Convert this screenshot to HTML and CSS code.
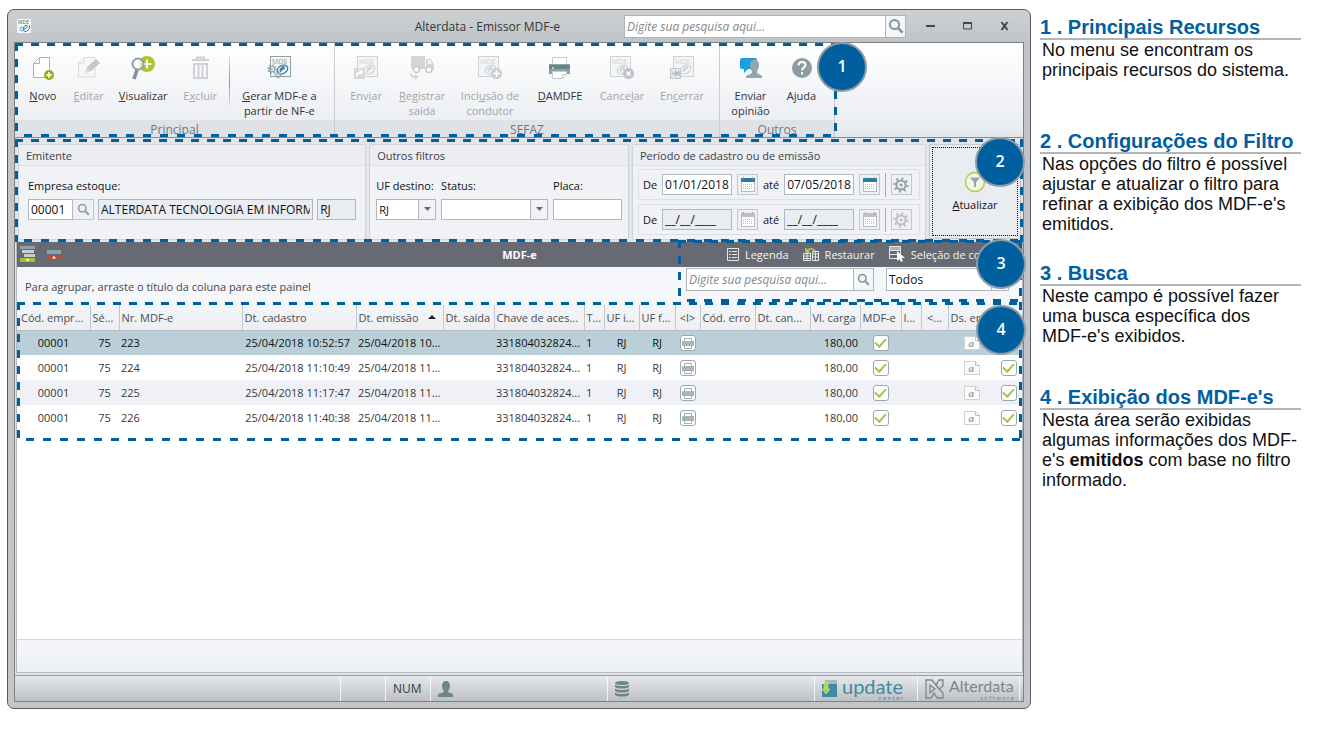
FILE: index.html
```html
<!DOCTYPE html>
<html lang="pt-BR">
<head>
<meta charset="utf-8">
<title>Alterdata - Emissor MDF-e</title>
<link rel="stylesheet" href="styles.css">
</head>
<body>
<svg class="defs" aria-hidden="true">
  <symbol id="i-lens" viewBox="0 0 16 16"><circle cx="6.5" cy="6.5" r="4.6" fill="none" stroke="currentColor" stroke-width="2"/><path d="M10 10l4.6 4.6" stroke="currentColor" stroke-width="2.6"/></symbol>
  <symbol id="i-mde" viewBox="0 0 24 24"><rect x="3.5" y=".5" width="20" height="20" fill="#f3f6f7" stroke="currentColor"/><text x="5" y="8" font-size="7" font-family="Open Sans, sans-serif" fill="currentColor">MDE</text></symbol>
  <symbol id="i-e" viewBox="0 0 24 24"><ellipse cx="15.500" cy="13.500" rx="5.500" ry="4" transform="rotate(-30 15.500 13.500)" fill="none" stroke="currentColor" stroke-width="1.300"/><path d="M12.500 14c3 0 6-2 4.500-3s-5 3-3 5" fill="none" stroke="currentColor" stroke-width="1.300"/></symbol>
  <symbol id="i-gear" viewBox="0 0 16 16"><circle cx="8" cy="8" r="4.600" fill="none" stroke="currentColor" stroke-width="2"/><circle cx="8" cy="8" r="6.600" fill="none" stroke="currentColor" stroke-width="2" stroke-dasharray="2.200 2.980"/><circle cx="8" cy="8" r="1.500" fill="currentColor"/></symbol>
  <symbol id="i-cal" viewBox="0 0 16 16"><rect x="1.500" y="1.500" width="13" height="13" fill="#fff" stroke="#b4bcc2"/><path d="M1 1h14v4H1z" fill="currentColor"/><path d="M3 7.500h10M3 9.500h10M3 11.500h10" stroke="#b4bcc2" stroke-dasharray="1 1"/><path d="M3.500 0v2M12.500 0v2" stroke="#9aa5aa"/></symbol>
  <symbol id="i-printer" viewBox="0 0 24 24"><path d="M4.500 9V1.500h14V9" fill="#fff" stroke="#c3cacd"/><path d="M1 8h21v10H1z" fill="#90a2a8"/><path d="M1 9h21v4H1z" fill="#6d838b"/><path d="M4 11h2v2H4z" fill="#c5d84a"/><path d="M4.500 15.500h14v3l-4 4h-10z" fill="#fff" stroke="#c3cacd"/><path d="M14.500 22v-3.500h4" fill="none" stroke="#c3cacd"/></symbol>
  <symbol id="i-print" viewBox="0 0 16 16"><rect x=".5" y=".5" width="15" height="15" rx="2.500" fill="#fdfefe" stroke="#9aaab0"/><path d="M4.500 6V3.500h7V6" fill="none" stroke="#9fb0b6"/><path d="M2 6h12v5H2z" fill="#a7b5ba"/><path d="M2 6h2v1H2z" fill="#c5d84a"/><path d="M4.500 10.500h7v3h-7z" fill="#fff" stroke="#9fb0b6"/></symbol>
  <symbol id="i-note" viewBox="0 0 16 14"><path d="M.5.5h11l4 4v9H.5z" fill="#fcfcfc" stroke="#cfd1d3"/><path d="M11.500.5v4h4" fill="none" stroke="#bfc2c4"/><text x="4.500" y="11" font-family="Liberation Serif, serif" font-size="11" font-style="italic" font-weight="bold" fill="#9b9fa2">a</text></symbol>
</svg>
<div class="page">
<main class="window">
  <header class="titlebar">
    <svg class="app-icon" viewBox="0 0 14 14"><path d="M0 0h14v14H0z" fill="#f4f8fa"/><text x="1" y="5" font-size="5" font-family="Open Sans, sans-serif" fill="#566">MDE</text><circle cx="5" cy="10" r="2" fill="none" stroke="#89a"/><path d="M6 10c4 0 6-4 3-3.500s-4 6 0 6c3-1 4-4 3.500-6" fill="none" stroke="#2c7da3"/></svg>
    <h1 class="title">Alterdata - Emissor MDF-e</h1>
    <form class="search search-top">
      <input type="text" aria-label="Pesquisa" placeholder="Digite sua pesquisa aqui...">
      <button type="button" aria-label="Pesquisar"><svg width="16" height="16"><use href="#i-lens"/></svg></button>
    </form>
    <div class="controls">
      <button type="button" aria-label="Minimizar"><svg width="10" height="10"><path d="M0 5h9" stroke="#43464b" stroke-width="2"/></svg></button>
      <button type="button" aria-label="Maximizar"><svg width="10" height="10"><path d="M.5 2h8v6h-8z" fill="none" stroke="#43464b"/><path d="M0 2h9" stroke="#43464b" stroke-width="2"/></svg></button>
      <button type="button" aria-label="Fechar"><svg width="10" height="10"><path d="M1.500 1l6 8M7.500 1l-6 8" stroke="#43464b" stroke-width="2"/></svg></button>
    </div>
  </header>
  <div class="frame">
    <nav class="ribbon">
      <div class="ribbon-groups">
        <section class="group group-main">
          <div class="tools">
            <button class="tool w-47" type="button"><svg width="24" height="24" viewBox="0 0 24 24"><path d="M8.500 1.500H18.500V21.500H2.500V7.500z" fill="#fff" stroke="#aab4b9"/><path d="M8.500 1.500v6h-6" fill="none" stroke="#aab4b9"/><circle cx="18" cy="19" r="5" fill="#8fae1f"/><path d="M18 16v6M15 19h6" stroke="#fff" stroke-width="1.500"/></svg><span><u>N</u>ovo</span></button>
            <button class="tool w-47" type="button" disabled><svg width="24" height="24" viewBox="0 0 24 24"><path d="M7 1.500h11V21H1.500V7z" fill="#f6f7f8" stroke="#d8dadc"/><path d="M7 1.500V7H1.500" fill="none" stroke="#d8dadc"/><path d="M8 17l2-6 9-8 4 4-9 8z" fill="#c6c8ca"/><path d="M8 17l2-6 3 4z" fill="#d9dbdc"/></svg><span><u>E</u>ditar</span></button>
            <button class="tool w-64" type="button"><svg width="24" height="24" viewBox="0 0 24 24"><circle cx="16" cy="8" r="8" fill="#a9c52b"/><path d="M16 3.500v9M11.500 8h9" stroke="#fff" stroke-width="2"/><circle cx="7" cy="8" r="5.500" fill="#fff" fill-opacity=".7" stroke="#8fa1a8" stroke-width="2"/><path d="M6 14l-3 9" stroke="#7f9299" stroke-width="3.500"/></svg><span><u>V</u>isualizar</span></button>
            <button class="tool w-51" type="button" disabled><svg width="24" height="24" viewBox="0 0 24 24"><path d="M4 4h17M9 3V1.500h7V3M6 8h13v14H6z" fill="none" stroke="#cfd1d4" stroke-width="2"/><path d="M10.500 8v14M14.500 8v14" stroke="#cfd1d4" stroke-width="2"/></svg><span>E<u>x</u>cluir</span></button>
            <i class="rule"></i>
            <button class="tool w-100" type="button"><svg class="dark" width="24" height="24" viewBox="0 0 24 24"><use href="#i-mde"/><g class="blue"><use href="#i-e"/></g><svg x="0" y="8" width="10" height="10"><use href="#i-gear"/></svg><svg x="7" y="15" width="8" height="8"><use href="#i-gear"/></svg></svg><span><u>G</u>erar MDF-e a<br>partir de NF-e</span></button>
          </div>
          <h2>Principal</h2>
        </section>
        <section class="group group-sefaz">
          <div class="tools">
            <button class="tool w-56" type="button" disabled><svg width="24" height="24" viewBox="0 0 24 24"><use href="#i-mde"/><use href="#i-e"/><path d="M0 12h11v11H0z" fill="#d6d8da"/><path d="M2.500 21c0-4 2-5 5-5m-2-2.500l3 2.500-3 2.500" fill="none" stroke="#fff" stroke-width="1.500"/></svg><span>Env<u>i</u>ar</span></button>
            <button class="tool w-56" type="button" disabled><svg width="24" height="24" viewBox="0 0 24 24"><path d="M1 0h14v13H1zM16 3h5l3 6v5h-8z" fill="#d3d5d7"/><path d="M18 4h2l2 4h-4z" fill="#f6f7f8"/><circle cx="6.500" cy="13.500" r="3" fill="#fff" stroke="#c6c8cb" stroke-width="1.500"/><circle cx="19" cy="13.500" r="3" fill="#fff" stroke="#c6c8cb" stroke-width="1.500"/><path d="M1 15c0 5 3 5 4 5v-2l4 3-4 3v-2c-4 0-6-3-4-7z" fill="#d3d5d7"/></svg><span><u>R</u>egistrar<br>saída</span></button>
            <button class="tool w-80" type="button" disabled><svg width="24" height="24" viewBox="0 0 24 24"><use href="#i-mde" x="-3"/><use href="#i-e" x="-3"/><circle cx="18.500" cy="17.500" r="5.500" fill="#cbcdd0"/><path d="M18.500 14v7M15 17.500h7" stroke="#fff" stroke-width="1.500"/></svg><span>Incl<u>u</u>são de<br>condutor</span></button>
            <button class="tool w-60" type="button"><svg width="24" height="24"><use href="#i-printer"/></svg><span><u>D</u>AMDFE</span></button>
            <button class="tool w-64" type="button" disabled><svg width="24" height="24" viewBox="0 0 24 24"><use href="#i-mde" x="-3"/><use href="#i-e" x="-3"/><circle cx="18.500" cy="17.500" r="5.500" fill="#bfc1c4"/><path d="M16.500 15.500l4 4m0-4l-4 4" stroke="#fff" stroke-width="1.500"/></svg><span>Cance<u>l</u>ar</span></button>
            <button class="tool w-56" type="button" disabled><svg width="24" height="24" viewBox="0 0 24 24"><use href="#i-mde"/><use href="#i-e"/><path d="M.5 12.500h10v10H.5z" fill="#e6e7e9" stroke="#c3c5c8"/><path d="M2 17.500h5m-2-2.500l2.500 2.500L5 20M9 15v5" fill="none" stroke="#b4b6b9" stroke-width="1.500"/></svg><span>En<u>c</u>errar</span></button>
          </div>
          <h2>SEFAZ</h2>
        </section>
        <section class="group group-other">
          <div class="tools">
            <button class="tool w-51" type="button"><svg width="24" height="24" viewBox="0 0 24 24"><path d="M3 2h13a2 2 0 0 1 2 2v9H9l-4 4v-4H3a2 2 0 0 1-2-2V4a2 2 0 0 1 2-2z" fill="#1e9de0"/><path d="M11 9c0-7 9-7 9 0 0 4-2 5-2 8l5 3v2H7v-2l6-3c0-3-2-4-2-8z" fill="#93a5ad"/></svg><span>Enviar<br>opinião</span></button>
            <button class="tool w-51" type="button"><svg width="24" height="24" viewBox="0 0 24 24"><circle cx="12" cy="12" r="10" fill="#8b9ca3"/><path d="M8.500 9.500c0-5 7-4.500 7-.5 0 2.500-3.500 2.500-3.500 5.500M12 16v2.500" fill="none" stroke="#fff" stroke-width="2"/></svg><span>Ajuda</span></button>
          </div>
          <h2>Outros</h2>
        </section>
        <div class="dashes dashes-ribbon"></div>
        <b class="badge badge-1">1</b>
      </div>
    </nav>

    <section class="filters">
      <fieldset class="panel panel-emit">
        <h3>Emitente</h3>
        <div class="panel-body">
          <label for="emp">Empresa estoque:</label>
          <div class="row">
            <div class="joined"><input id="emp" class="f-44" type="text" value="00001"><button class="sq" type="button" aria-label="Buscar empresa"><svg width="13" height="13"><use href="#i-lens"/></svg></button></div>
            <input class="grow" type="text" readonly aria-label="Nome da empresa" value="ALTERDATA TECNOLOGIA EM INFORMÁTICA">
            <input class="f-39" type="text" readonly aria-label="UF" value="RJ">
          </div>
        </div>
      </fieldset>
      <fieldset class="panel panel-other">
        <h3>Outros filtros</h3>
        <div class="panel-body fields">
          <label for="uf">UF destino:</label><label for="st">Status:</label><label for="pl">Placa:</label>
          <select id="uf"><option>RJ</option></select>
          <select id="st"><option></option></select>
          <input id="pl" type="text">
        </div>
      </fieldset>
      <fieldset class="panel panel-period">
        <h3>Período de cadastro ou de emissão</h3>
        <div class="periods">
          <div class="period">
            <label for="d1">De</label><input id="d1" type="text" value="01/01/2018">
            <button class="sq teal" type="button" aria-label="Calendário"><svg width="16" height="16"><use href="#i-cal"/></svg></button>
            <label for="d2">até</label><input id="d2" type="text" value="07/05/2018">
            <button class="sq teal" type="button" aria-label="Calendário"><svg width="16" height="16"><use href="#i-cal"/></svg></button>
            <i class="sep"></i>
            <button class="sq" type="button" aria-label="Opções"><svg width="16" height="16"><use href="#i-gear"/></svg></button>
          </div>
          <div class="period">
            <label for="d3">De</label><input id="d3" type="text" readonly value="__/__/____">
            <button class="sq" type="button" disabled aria-label="Calendário"><svg width="16" height="16"><use href="#i-cal"/></svg></button>
            <label for="d4">até</label><input id="d4" type="text" readonly value="__/__/____">
            <button class="sq" type="button" disabled aria-label="Calendário"><svg width="16" height="16"><use href="#i-cal"/></svg></button>
            <i class="sep"></i>
            <button class="sq" type="button" disabled aria-label="Opções"><svg width="16" height="16"><use href="#i-gear"/></svg></button>
          </div>
        </div>
      </fieldset>
      <button class="refresh" type="button"><svg width="22" height="22" viewBox="0 0 22 22"><circle cx="11" cy="11" r="9.500" fill="#f3f6e4" stroke="#b5cb4e" stroke-width="1.500"/><path d="M6 6.500h10l-4 5v5l-2-1v-4z" fill="#93a7b0"/></svg><span><u>A</u>tualizar</span></button>
      <div class="dashes dashes-filters"></div>
      <b class="badge badge-2">2</b>
    </section>

    <section class="grid">
      <div class="grid-top">
        <div class="bar">
          <div class="bar-left">
            <button type="button" aria-label="Expandir"><svg width="16" height="17"><path d="M0 0h15v3H0z" fill="#8fa1a8"/><path d="M2 4h12v3H2zM4 8h11v3H4z" fill="#c5ced3"/><path d="M0 12h15v4H0z" fill="#a4c22d"/><path d="M5.500 13h4l-2 2.500z" fill="#fff"/></svg></button>
            <button type="button" aria-label="Recolher"><svg width="16" height="17"><path d="M1 4h14v4H1z" fill="#8fa1a8"/><path d="M1 9h14v4H1z" fill="#b55132"/><path d="M6 12.500h4L8 10z" fill="#fff"/></svg></button>
          </div>
          <h2>MDF-e</h2>
          <div class="bar-right">
            <button type="button"><svg width="13" height="14"><path d="M.5.5h11v12H.5z" fill="none" stroke="#e4e6e8"/><path d="M2 3.500h2M5 3.500h5M2 6.500h2M5 6.500h5M2 9.500h2M5 9.500h5" stroke="#e4e6e8"/></svg>Legenda</button>
            <button type="button"><svg width="17" height="14"><path d="M.5 5.500h7v7h-7zM.5 8h7M.5 10.500h7M4 5.500v7M9.500 3.500h6v9h-6zM9.500 6h6M9.500 9h6M12.500 3.500v9" fill="none" stroke="#e4e6e8"/><path d="M4 3c2-3 6-3 8 0M3 0v4h4" fill="none" stroke="#b8cc55" stroke-width="1.500"/></svg>Restaurar</button>
            <button type="button"><svg width="17" height="17"><path d="M.5.5h11v12H.5z" fill="none" stroke="#e4e6e8"/><path d="M1 1h10v3H1z" fill="#aeb2b7"/><path d="M0 4.500h12M0 8.500h12" stroke="#e4e6e8"/><path d="M8 5v10l2.500-2 1.500 3 2-1-1.500-3H16z" fill="#fff"/></svg>Seleção de colunas</button>
          </div>
        </div>
        <div class="grouping">
          <p>Para agrupar, arraste o título da coluna para este painel</p>
          <form class="search search-grid">
            <input type="text" aria-label="Pesquisa na lista" placeholder="Digite sua pesquisa aqui...">
            <button type="button" aria-label="Pesquisar"><svg width="13" height="13"><use href="#i-lens"/></svg></button>
          </form>
          <select class="scope" aria-label="Campo da pesquisa"><option>Todos</option></select>
        </div>
        <div class="dashes dashes-search"></div>
        <b class="badge badge-3">3</b>
      </div>
      <div class="table-wrap">
        <table>
          <colgroup><col class="c73"><col class="c29"><col class="c123"><col class="c114"><col class="c87"><col class="c51"><col class="c90"><col class="c20"><col class="c35"><col class="c36"><col class="c25"><col class="c55"><col class="c55"><col class="c50"><col class="c41"><col class="c20"><col class="c27"><col class="c47"><col class="c27"></colgroup>
          <thead><tr><th>Cód. empr...</th><th>Sé...</th><th>Nr. MDF-e</th><th>Dt. cadastro</th><th class="sorted">Dt. emissão</th><th>Dt. saída</th><th>Chave de aces...</th><th>T...</th><th>UF i...</th><th>UF f...</th><th class="mid">&lt;I&gt;</th><th>Cód. erro</th><th>Dt. can...</th><th>Vl. carga</th><th>MDF-e</th><th>I...</th><th class="mid">&lt;...</th><th>Ds. er...</th><th></th></tr></thead>
          <tbody>
            <tr class="selected"><td class="mid">00001</td><td class="mid">75</td><td>223</td><td class="end">25/04/2018 10:52:57</td><td>25/04/2018 10...</td><td></td><td>331804032824...</td><td>1</td><td class="mid">RJ</td><td class="mid">RJ</td><td class="mid"><svg width="16" height="16"><use href="#i-print"/></svg></td><td></td><td></td><td class="money">180,00</td><td class="mid"><input type="checkbox" checked aria-label="MDF-e 223"></td><td></td><td></td><td class="mid"><svg width="16" height="14"><use href="#i-note"/></svg></td><td class="mid"><input type="checkbox" checked aria-label="Situação 223"></td></tr>
            <tr><td class="mid">00001</td><td class="mid">75</td><td>224</td><td class="end">25/04/2018 11:10:49</td><td>25/04/2018 11...</td><td></td><td>331804032824...</td><td>1</td><td class="mid">RJ</td><td class="mid">RJ</td><td class="mid"><svg width="16" height="16"><use href="#i-print"/></svg></td><td></td><td></td><td class="money">180,00</td><td class="mid"><input type="checkbox" checked aria-label="MDF-e 224"></td><td></td><td></td><td class="mid"><svg width="16" height="14"><use href="#i-note"/></svg></td><td class="mid"><input type="checkbox" checked aria-label="Situação 224"></td></tr>
            <tr><td class="mid">00001</td><td class="mid">75</td><td>225</td><td class="end">25/04/2018 11:17:47</td><td>25/04/2018 11...</td><td></td><td>331804032824...</td><td>1</td><td class="mid">RJ</td><td class="mid">RJ</td><td class="mid"><svg width="16" height="16"><use href="#i-print"/></svg></td><td></td><td></td><td class="money">180,00</td><td class="mid"><input type="checkbox" checked aria-label="MDF-e 225"></td><td></td><td></td><td class="mid"><svg width="16" height="14"><use href="#i-note"/></svg></td><td class="mid"><input type="checkbox" checked aria-label="Situação 225"></td></tr>
            <tr><td class="mid">00001</td><td class="mid">75</td><td>226</td><td class="end">25/04/2018 11:40:38</td><td>25/04/2018 11...</td><td></td><td>331804032824...</td><td>1</td><td class="mid">RJ</td><td class="mid">RJ</td><td class="mid"><svg width="16" height="16"><use href="#i-print"/></svg></td><td></td><td></td><td class="money">180,00</td><td class="mid"><input type="checkbox" checked aria-label="MDF-e 226"></td><td></td><td></td><td class="mid"><svg width="16" height="14"><use href="#i-note"/></svg></td><td class="mid"><input type="checkbox" checked aria-label="Situação 226"></td></tr>
          </tbody>
        </table>
        <div class="dashes dashes-table"></div>
        <b class="badge badge-4">4</b>
      </div>
      <div class="grid-foot"></div>
    </section>

    <footer class="status">
      <span></span><span></span>
      <span class="num">NUM</span>
      <span><svg width="16" height="16"><path d="M4 5c0-7 8-7 8 0 0 4-2 4-2 6l5 2v3H0v-3l6-2c0-2-2-2-2-6z" fill="#6f858c"/></svg></span>
      <span><svg width="14" height="16" fill="#6f858c"><ellipse cx="7" cy="2" rx="7" ry="2"/><path d="M0 3.500c3 2 11 2 14 0V6c-3 2-11 2-14 0zM0 7.500c3 2 11 2 14 0V10c-3 2-11 2-14 0zM0 11.500c3 2 11 2 14 0V14c-3 2-11 2-14 0z"/></svg></span>
      <span class="logo logo-update"><svg width="16" height="19"><path d="M3 1h12v5H3z" fill="#a9b8c0"/><path d="M0 5h15v13H0z" fill="#3e8ba3"/><path d="M2 3h4v7h2l-4 5-4-5h2z" fill="#b4d34a" stroke="#e5efb0" stroke-width=".5"/></svg><b>update<small>c e n t e r</small></b></span>
      <span class="logo"><svg width="20" height="20" fill="none" stroke="#7d868b" stroke-width="1.300"><path d="M1 1h6l4 5 3-5h4v6l-4 3 4 4v5h-6l-3-5-3 5H1zM5 6v8l5-4zM11 6l3 4"/></svg><b>Alterdata<small>s o f t w a r e</small></b></span>
    </footer>
  </div>
</main>

<aside class="notes">
  <section><h2>1 . Principais Recursos</h2><p>No menu se encontram os principais recursos do sistema.</p></section>
  <section><h2>2 . Configurações do Filtro</h2><p>Nas opções do filtro é possível ajustar e atualizar o filtro para refinar a exibição dos MDF-e's emitidos.</p></section>
  <section><h2>3 . Busca</h2><p>Neste campo é possível fazer uma busca específica dos MDF-e's exibidos.</p></section>
  <section><h2>4 . Exibição dos MDF-e's</h2><p>Nesta área serão exibidas algumas informações dos MDF-e's <strong>emitidos</strong> com base no filtro informado.</p></section>
</aside>
</div>
</body>
</html>
```

FILE: styles.css
```css
* { box-sizing: border-box; }
body { margin: 0; background: #fff; font-family: "Open Sans", "Noto Sans", sans-serif; font-size: 11px; line-height: 15px; color: #37393d; }
h1, h2, h3, p, fieldset { margin: 0; padding: 0; border: 0; font-weight: 400; font-size: inherit; min-width: 0; }
button, input, select { font: inherit; color: inherit; margin: 0; padding: 0; border-radius: 0; }
button { background: none; border: 0; }
svg { display: block; flex: none; }
.defs { position: absolute; width: 0; height: 0; }

.page { display: flex; gap: 9px; min-height: 100vh; padding: 9px 24px 20px 7px; }
.window { flex: 1; min-width: 0; display: flex; flex-direction: column; padding: 0 6px 6px; border: 1px solid #565b64; border-radius: 7px; background: linear-gradient(#cdd0d3, #c0c4c7 33px, #c3c6c9); }

/* Title bar */
.titlebar { display: flex; align-items: center; height: 32px; padding: 0 5px 0 3px; }
.app-icon { width: 14px; height: 14px; }
.title { flex: 1; text-align: right; padding-right: 64px; font-size: 12px; color: #33363a; }
.search { display: flex; border: 1px solid #aeb4ba; background: #fff; color: #83969e; }
.search input { flex: 1; min-width: 0; border: 0; padding: 0 2px; font-size: 12px; font-style: italic; outline: 0; }
.search input::placeholder { color: #85888c; opacity: 1; }
.search button { width: 20px; border-left: 1px solid #aeb4ba; background: #f4f6f8; display: grid; place-items: center; }
.search-top { width: 282px; height: 23px; }
.controls { display: flex; gap: 27px; margin: 0 9px 0 20px; }

.frame { flex: 1; display: flex; flex-direction: column; border: 1px solid #7c8186; background: #e2e5e9; }

/* Ribbon */
.ribbon { background: linear-gradient(#fff, #eceef2 77px, #e3e6ea 95px); border-bottom: 1px solid #868b90; }
.ribbon-groups { position: relative; display: flex; width: 820px; }
.group { display: flex; flex-direction: column; height: 94px; border-right: 1px solid #c9cdd2; }
.group-main { width: 320px; }
.group-sefaz { width: 385px; }
.group-other { flex: 1; }
.group h2 { height: 17px; font-size: 12px; line-height: 19px; text-align: center; color: #72777e; background: #dfe2e7; }
.tools { flex: 1; display: flex; padding: 13px 5px 0; }
.group-sefaz .tools { padding-left: 3px; }
.tool { display: flex; flex-direction: column; align-items: center; gap: 8px; color: #303338; line-height: 15px; white-space: nowrap; align-self: flex-start; }
.tool:disabled { color: #a2a5a9; }
.tool:disabled svg { color: #cfd1d4; }
.tool .dark { color: #8fa1a8; }
.blue { color: #2478a6; }
.w-47 { width: 46px; }
.w-51 { width: 51px; }
.w-56 { width: 56px; }
.w-60 { width: 60px; }
.w-64 { width: 64px; }
.w-80 { width: 80px; }
.w-100 { width: 100px; }
.rule { width: 1px; height: 50px; margin-left: 3px; background: linear-gradient(#dfe1e4, #8c9094, #dfe1e4); }

/* Callout outlines and badges */
.dashes { position: absolute; pointer-events: none;
  background:
    repeating-linear-gradient(90deg, #00609f 0 8px, transparent 8px 16px) top / 100% 3px no-repeat,
    repeating-linear-gradient(90deg, transparent 0 9px, #00609f 9px 17px) bottom / 100% 3px no-repeat,
    repeating-linear-gradient(#00609f 0 8px, transparent 8px 16px) left / 3px 100% no-repeat,
    repeating-linear-gradient(#00609f 0 8px, transparent 8px 16px) right / 3px 100% no-repeat; }
.dashes-ribbon { inset: 0 -2px 0 0; }
.dashes-filters { inset: 1px 0 0; }
.dashes-search { inset: -2px 0 3px auto; width: 344px; }
.dashes-table { inset: -3px 0 0; }
.badge { position: absolute; z-index: 2; width: 50px; height: 50px; border: 2px solid #8f9aa5; border-radius: 50%; background: #00609f; color: #fff; font-size: 16px; font-weight: 600; line-height: 44px; text-align: center; }
.badge-1 { right: -32px; top: -1px; }
.badge-2 { right: -2px; top: -1px; }
.badge-3 { right: -4px; top: -3px; }
.badge-4 { right: -4px; top: 0; }

/* Filters */
.filters { position: relative; display: flex; gap: 3px; padding: 6px 2px 2px 3px; color: #111; }
.panel { height: 96px; border: 1px solid #d0d3d9; border-radius: 2px; background: #f1f2f6; }
.panel h3 { height: 21px; padding: 0 7px; line-height: 21px; color: #3d4045; background: #ebedf1; border-bottom: 1px solid #dfe1e5; }
.panel-emit { flex: 349; }
.panel-other { flex: 260; }
.panel-period { flex: 0 0 294px; }
.panel-body { padding: 12px 9px 0; }
.panel-emit label { display: block; height: 21px; line-height: 15px; }
.row { display: flex; gap: 4px; }
.joined { display: flex; }
.joined .sq { border-left: 0; }
.filters input, select { height: 21px; border: 1px solid #b0b7bf; background: #fff; padding: 0 2px; min-width: 0; }
.filters input { font-size: 12px; }
.filters input[readonly] { background: #e9ecf0; }
.f-44 { width: 45px; }
.f-39 { width: 39px; }
.grow { flex: 1; }
.sq { width: 21px; height: 21px; flex: none; border: 1px solid #c0c6cd; background: #eff1f4; color: #8fa1a8; display: grid; place-items: center; }
.sq:disabled { color: #bcbfc3; }
.teal { color: #2b7b9a; }
.fields { display: grid; grid-template-columns: 60fr 107fr 69fr; column-gap: 5px; padding: 12px 6px 0; }
.fields label { height: 21px; line-height: 15px; white-space: nowrap; }
select { appearance: none; background: #fff url("data:image/svg+xml,%3Csvg xmlns='http://www.w3.org/2000/svg' width='17' height='21'%3E%3Cpath d='M0 0h17v21H0z' fill='%23f0f2f5'/%3E%3Cpath d='M.5 0v21' stroke='%23b0b7bf'/%3E%3Cpath d='M6 8h7l-3.500 4z' fill='%23666b70'/%3E%3C/svg%3E") right center no-repeat; }
.periods { display: flex; flex-direction: column; gap: 4px; padding: 3px 5px 0; }
.period { display: flex; align-items: center; justify-content: space-between; height: 31px; padding: 0 7px 0 4px; border: 1px solid #dcdfe4; border-radius: 2px; }
.period input { width: 70px; }
.sep { width: 1px; height: 24px; background: #a5abb2; }
.refresh { flex: 0 0 92px; height: 95px; border: 1px solid #c3c8ce; background: #e9ecf1; outline: 1px dotted #111; outline-offset: -4px; display: flex; flex-direction: column; align-items: center; justify-content: center; gap: 4px; color: #111; }

/* Document list */
.grid { flex: 1; display: flex; flex-direction: column; margin: 0 0 2px 1px; border: solid #b3b8c0; border-width: 0 1px 1px; background: #fff; }
.grid-top { position: relative; }
.bar { display: grid; grid-template-columns: 1fr auto 1fr; align-items: center; height: 25px; padding: 0 3px; background: #676a72; color: #f4f5f6; }
.bar h2 { font-weight: 700; color: #fff; }
.bar-left, .bar-right { display: flex; align-items: center; gap: 10px; }
.bar-right { justify-content: flex-end; gap: 14px; padding-right: 11px; }
.bar-right button { display: flex; align-items: center; gap: 5px; white-space: nowrap; }
.grouping { display: flex; height: 38px; padding: 1px 13px 0 8px; background: #f5f6f9; }
.grouping p { flex: 1; align-self: center; color: #46494e; }
.search-grid { width: 188px; height: 23px; }
.scope { width: 123px; height: 23px; margin-left: 12px; color: #111; font-size: 12px; }
.table-wrap { position: relative; padding-bottom: 11px; }
table { width: 100%; table-layout: fixed; border-collapse: collapse; }
th, td { height: 25px; padding: 0 2px; text-align: left; font-weight: 400; white-space: nowrap; overflow: hidden; }
th:first-child { padding-left: 4px; }
th { border-right: 1px solid #c4c8ce; border-bottom: 1px solid #b9bec5; background: linear-gradient(#f4f5f8, #eceef2); color: #4a4d52; }
tbody tr:nth-child(odd) { background: #f0f1f6; }
tbody .selected:nth-child(odd) { background: #bacfd7; color: #101214; }
.mid { text-align: center; }
.end { text-align: right; padding-right: 6px; }
.money { text-align: right; }
td svg { margin: 0 auto; }
.sorted::after { content: ""; display: inline-block; margin-left: 9px; vertical-align: 3px; border: solid transparent; border-width: 0 4px 4px; border-bottom-color: #222; }
td input { appearance: none; display: block; width: 16px; height: 16px; margin: 0 auto; border: 1px solid #9aa9b0; border-radius: 3px; background: #fff; }
td input:checked::after { content: ""; display: block; width: 5px; height: 9px; margin: 0 auto; border: solid #a8c34d; border-width: 0 2px 2px 0; transform: rotate(42deg); }
.c20 { width: 20px; } .c25 { width: 25px; } .c27 { width: 27px; } .c29 { width: 29px; } .c35 { width: 35px; } .c36 { width: 36px; }
.c41 { width: 41px; } .c47 { width: 47px; } .c50 { width: 50px; } .c51 { width: 51px; } .c55 { width: 55px; } .c73 { width: 73px; }
.c87 { width: 87px; } .c90 { width: 90px; } .c114 { width: 114px; } .c123 { width: 123px; }
.grid-foot { height: 33px; margin-top: auto; border-top: 1px solid #d6d9dd; background: linear-gradient(#f5f6f8, #edf0f4); }

/* Status bar */
.status { display: grid; grid-template-columns: 326fr 45px 45px 177fr 207fr 103px 102px 3px; height: 26px; border-top: 1px solid #969ca2; background: linear-gradient(#e6e8eb, #bdc1c4); }
.status span { display: flex; align-items: center; padding-left: 7px; border-right: 1px solid #f2f3f4; min-width: 0; }
.status .num { font-size: 12px; }
.status .logo { gap: 4px; color: #7d868b; }
.logo b { display: flex; flex-direction: column; font-family: Lato, sans-serif; font-size: 16px; line-height: 18px; font-weight: 400; }
.logo small { font-size: 6px; line-height: 6px; text-align: right; }
.status .logo-update { color: #3e8ba3; }
.logo-update b { font-size: 20px; }

/* Explanatory notes */
.notes { flex: 0 0 261px; display: grid; grid-template-rows: 114px 132px 124px auto; padding-top: 8px; font-family: "Liberation Sans", Arial, sans-serif; color: #111; }
.notes h2 { height: 23px; border-bottom: 2px solid #b1b5ba; font-size: 20px; line-height: 21px; font-weight: 700; color: #00609f; white-space: nowrap; }
.notes p { padding: 0 3px 0 2px; font-size: 18px; line-height: 20px; }
```
